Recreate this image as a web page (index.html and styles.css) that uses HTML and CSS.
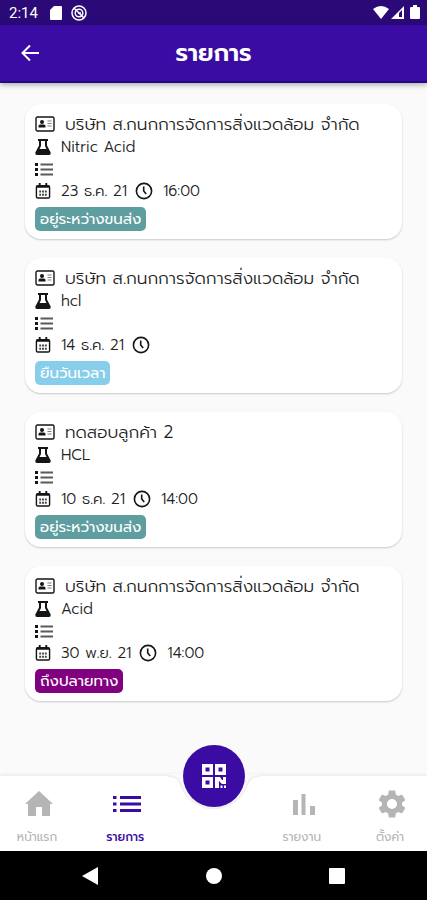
FILE: index.html
```html
<!DOCTYPE html>
<html lang="th">
<head>
<meta charset="utf-8">
<meta name="viewport" content="width=device-width, initial-scale=1">
<title>รายการ</title>
<link rel="stylesheet" href="styles.css">
</head>
<body>
<svg class="defs" aria-hidden="true">
  <symbol id="card" viewBox="0 0 20 16"><rect x="1" y="1" width="18" height="14" rx="1.5" fill="none" stroke="currentColor" stroke-width="1.4"/><circle cx="7" cy="6" r="2" fill="currentColor"/><path d="M3.5 11.5V10q0-1.500 1.500-1.500h4q1.500 0 1.500 1.500v1.500z" fill="currentColor"/><path d="M12.500 5h4M12.500 7.500h4M12.500 10h4" stroke="currentColor" stroke-width="1" opacity=".55"/></symbol>
  <symbol id="flask" viewBox="0 0 16 16"><path d="M3 0h10v2h-1v4.500l3.700 7Q16 16 14 16H2q-2 0-1.700-2.500L4 6.500V2H3zM6 2v5L4.500 10h7L10 7V2z" fill="currentColor" fill-rule="evenodd"/></symbol>
  <symbol id="rows" viewBox="0 0 18 15"><path d="M0 1h3v3H0zM0 6h3v3H0zM0 11h3v3H0z" fill="currentColor"/><path d="M5.500 2.500H18M5.500 7.500H18M5.500 12.500H18" stroke="currentColor" stroke-width="2" opacity=".7"/></symbol>
  <symbol id="calendar" viewBox="0 0 16 17"><rect x="1" y="3" width="14" height="13" rx="1.500" fill="none" stroke="currentColor" stroke-width="1.500"/><path d="M1 3h14v2H1zM3.500 0h2v4h-2zM10.500 0h2v4h-2z" fill="currentColor"/><path d="M4 8h2v2H4zM7 8h2v2H7zM10 8h2v2h-2zM4 11.500h2v2H4zM7 11.500h2v2H7zM10 11.500h2v2h-2z" fill="currentColor" opacity=".8"/></symbol>
  <symbol id="clock" viewBox="0 0 18 18"><circle cx="9" cy="9" r="7.600" fill="none" stroke="currentColor" stroke-width="1.600"/><path d="M8.700 4.500V9l2.500 3" fill="none" stroke="currentColor" stroke-width="1.600"/></symbol>
</svg>

<div class="status">
  <span class="status-time">2:14</span>
  <svg width="12" height="14" viewBox="0 0 12 14"><path d="M4 0h7q1 0 1 1v12q0 1-1 1H1q-1 0-1-1V4z" fill="#fff"/></svg>
  <svg width="16" height="16" viewBox="0 0 16 16" fill="none" stroke="#fff"><circle cx="8" cy="8" r="7" stroke-width="1.500"/><circle cx="8" cy="8" r="3.800" stroke-width="1.500"/><path d="M3 3l10 10" stroke-width="1.500"/><path d="M7 8h3" stroke-width="1.500"/></svg>
  <svg class="status-right" width="48" height="16" viewBox="0 0 48 16"><path d="M0 4Q8-2 16 4L8 14z" fill="#fff"/><path d="M31 1v13H18zM26 8v4h3V5z" fill="#fff" fill-rule="evenodd"/><path d="M38 2h2V0h4v2h2q1 0 1 1v10q0 1-1 1h-8q-1 0-1-1V3q0-1 1-1z" fill="#fff"/></svg>
</div>

<header class="appbar">
  <button class="back" type="button" aria-label="กลับ"><svg width="20" height="18" viewBox="0 0 20 18" fill="none" stroke="#fff" stroke-width="2"><path d="M19 9H3M10 1.500L2.500 9l7.500 7.500"/></svg></button>
  <h1>รายการ</h1>
</header>

<main class="list">
  <article class="job">
    <h2><svg class="ic-card"><use href="#card"/></svg>บริษัท ส.กนกการจัดการสิ่งแวดล้อม จำกัด</h2>
    <p class="line"><svg class="ic"><use href="#flask"/></svg>Nitric Acid</p>
    <p class="line"><svg class="ic-rows"><use href="#rows"/></svg></p>
    <p class="line"><svg class="ic"><use href="#calendar"/></svg><span class="when">23 ธ.ค. 21<svg class="ic-clock"><use href="#clock"/></svg></span><span>16:00</span></p>
    <span class="badge transit">อยู่ระหว่างขนส่ง</span>
  </article>
  <article class="job">
    <h2><svg class="ic-card"><use href="#card"/></svg>บริษัท ส.กนกการจัดการสิ่งแวดล้อม จำกัด</h2>
    <p class="line"><svg class="ic"><use href="#flask"/></svg>hcl</p>
    <p class="line"><svg class="ic-rows"><use href="#rows"/></svg></p>
    <p class="line"><svg class="ic"><use href="#calendar"/></svg><span class="when">14 ธ.ค. 21<svg class="ic-clock"><use href="#clock"/></svg></span></p>
    <span class="badge confirm">ยืนวันเวลา</span>
  </article>
  <article class="job">
    <h2><svg class="ic-card"><use href="#card"/></svg>ทดสอบลูกค้า 2</h2>
    <p class="line"><svg class="ic"><use href="#flask"/></svg>HCL</p>
    <p class="line"><svg class="ic-rows"><use href="#rows"/></svg></p>
    <p class="line"><svg class="ic"><use href="#calendar"/></svg><span class="when">10 ธ.ค. 21<svg class="ic-clock"><use href="#clock"/></svg></span><span>14:00</span></p>
    <span class="badge transit">อยู่ระหว่างขนส่ง</span>
  </article>
  <article class="job">
    <h2><svg class="ic-card"><use href="#card"/></svg>บริษัท ส.กนกการจัดการสิ่งแวดล้อม จำกัด</h2>
    <p class="line"><svg class="ic"><use href="#flask"/></svg>Acid</p>
    <p class="line"><svg class="ic-rows"><use href="#rows"/></svg></p>
    <p class="line"><svg class="ic"><use href="#calendar"/></svg><span class="when">30 พ.ย. 21<svg class="ic-clock"><use href="#clock"/></svg></span><span>14:00</span></p>
    <span class="badge arrived">ถึงปลายทาง</span>
  </article>
</main>

<nav class="tabs">
  <svg class="notch" width="100" height="40" viewBox="0 -2 100 40"><path d="M4-2V0C12 0 15 3 17 9A35 35 0 0 0 83 9C85 3 88 0 96 0V-2z" fill="#fafafa"/><path d="M4 0C12 0 15 3 17 9A35 35 0 0 0 83 9C85 3 88 0 96 0" fill="none" stroke="#f0f0f0" stroke-width="2"/></svg>
  <button class="scan" type="button" aria-label="สแกน"><svg width="24" height="24" viewBox="0 0 24 24"><path fill="#fff" fill-rule="evenodd" d="M0 0h11v11H0zM3.500 3.500v4h4v-4zM13 0h11v11H13zM16.500 3.500v4h4v-4zM0 13h11v11H0zM3.500 16.500v4h4v-4zM13 13h5l2 3h1v-3h3v7h-4l-3-3v7h-4zM18.500 21.500h2V24h-2zM22 21.500h2V24h-2z"/></svg></button>
  <a class="tab" href="#home"><svg viewBox="0 0 28 28"><path d="M14 1l14 13h-3v12h-8v-9h-6v9H3V14H0z" fill="currentColor"/></svg>หน้าแรก</a>
  <a class="tab active" href="#list"><svg viewBox="0 0 28 28"><path d="M0 6h3.500v3H0zM0 12.500h3.500v3H0zM0 19h3.500v3H0zM7 6h21v3H7zM7 12.500h21v3H7zM7 19h21v3H7z" fill="currentColor"/></svg>รายการ</a>
  <span class="tab-gap"></span>
  <a class="tab" href="#report"><svg viewBox="0 0 28 28"><path d="M3 10h5v15H3zM11.500 4h4v21h-4zM20 16h5v9h-5z" fill="currentColor"/></svg>รายงาน</a>
  <a class="tab" href="#settings"><svg viewBox="2 2 20 20"><path d="M19.140 12.940c.04-.3.060-.610.060-.940 0-.320-.02-.640-.070-.940l2.030-1.580c.180-.140.230-.410.120-.610l-1.920-3.320c-.120-.220-.370-.290-.590-.220l-2.390.960c-.500-.380-1.030-.700-1.620-.940l-.360-2.540c-.040-.240-.240-.410-.480-.410h-3.840c-.240 0-.430.170-.470.410l-.360 2.540c-.590.240-1.130.570-1.620.940l-2.390-.960c-.220-.080-.470 0-.590.220L2.740 8.870c-.120.210-.080.470.120.610l2.030 1.580c-.050.300-.090.630-.090.940s.020.640.070.940l-2.030 1.580c-.180.140-.230.410-.120.610l1.920 3.320c.120.220.370.290.590.220l2.390-.960c.500.380 1.030.700 1.620.940l.360 2.540c.050.240.240.410.480.410h3.840c.240 0 .440-.170.470-.410l.360-2.540c.590-.240 1.130-.560 1.620-.940l2.390.960c.220.080.470 0 .590-.220l1.920-3.320c.120-.220.070-.470-.120-.610zM12 15.600A3.600 3.600 0 1 1 12 8.400a3.600 3.600 0 0 1 0 7.200z" fill="currentColor" fill-rule="evenodd"/></svg>ตั้งค่า</a>
</nav>

<footer class="system">
  <button type="button" aria-label="ย้อนกลับ"><svg width="18" height="18" viewBox="0 0 18 18"><path d="M16 0v18L0 9z" fill="#fff"/></svg></button>
  <button type="button" aria-label="โฮม"><svg width="18" height="18" viewBox="0 0 18 18"><circle cx="9" cy="9" r="8" fill="#fff"/></svg></button>
  <button type="button" aria-label="ล่าสุด"><svg width="18" height="18" viewBox="0 0 18 18"><rect x="1" y="1" width="16" height="16" rx="1" fill="#fff"/></svg></button>
</footer>
</body>
</html>
```
FILE: styles.css
```css
* { box-sizing: border-box; margin: 0; }

body {
  min-height: 100vh;
  display: flex;
  flex-direction: column;
  background: #fafafa;
  color: #222;
  font-family: Prompt, Kanit, "Noto Sans Thai", "Noto Sans", sans-serif;
  font-size: 15px;
  font-weight: 300;
}

button {
  display: grid;
  place-items: center;
  padding: 0;
  border: 0;
  background: none;
}

.defs { position: absolute; width: 0; height: 0; }

.status {
  display: flex;
  align-items: center;
  gap: 9px;
  height: 25px;
  padding: 0 6px 0 9px;
  background: #2b0a78;
  color: #fff;
}
.status-time { padding-right: 3px; font: 400 15px/24px Roboto, sans-serif; }
.status-right { margin-left: auto; }

.appbar {
  display: grid;
  grid-template-columns: 48px 1fr 48px;
  align-items: center;
  height: 58px;
  padding: 0 6px;
  background: #3a0ca3;
  color: #fff;
  border-bottom: 2px solid #25087f;
  box-shadow: 0 2px 5px rgba(0, 0, 0, .3);
}
.back { height: 48px; }
.appbar h1 { font-size: 24px; line-height: 32px; font-weight: 600; text-align: center; }

.list {
  flex: 1;
  display: flex;
  flex-direction: column;
  gap: 19px;
  padding: 21px 25px 40px;
}

.job {
  padding: 8px 10px;
  border-radius: 16px;
  background: #fff;
  box-shadow: 0 1px 2px rgba(0, 0, 0, .2);
}
.job h2 {
  display: flex;
  align-items: center;
  gap: 10px;
  font-size: 17px;
  line-height: 24px;
  font-weight: 300;
  white-space: nowrap;
}
.line { display: flex; align-items: center; gap: 10px; height: 22px; line-height: 22px; }
.when { display: flex; align-items: center; gap: 8px; }
.job svg { color: #151515; flex: none; }
.ic-card { width: 20px; height: 16px; }
.ic { width: 16px; height: 16px; }
.ic-rows { width: 18px; height: 15px; }
.ic-clock { width: 18px; height: 18px; }

.badge {
  display: block;
  width: fit-content;
  margin-top: 5px;
  padding: 0 5px;
  border-radius: 5px;
  color: #fff;
  line-height: 24px;
  font-weight: 400;
}
.transit { background: #5f9ea0; }
.confirm { background: #87ceeb; }
.arrived { background: #800080; }

.tabs {
  position: relative;
  display: flex;
  justify-content: space-between;
  height: 75px;
  padding: 14px 15px 0;
  background: #fff;
  box-shadow: 0 -1px 4px rgba(0, 0, 0, .08);
}
.notch { position: absolute; top: -2px; left: 50%; transform: translateX(-50%); }
.scan {
  position: absolute;
  top: 0;
  left: 50%;
  width: 62px;
  height: 62px;
  border-radius: 50%;
  background: #3a0ca3;
  transform: translate(-50%, -50%);
}
.tab, .tab-gap { width: 44px; }
.tab {
  display: flex;
  flex-direction: column;
  align-items: center;
  gap: 9px;
  color: #b5b5b5;
  font-size: 12px;
  line-height: 20px;
  font-weight: 400;
  text-decoration: none;
  white-space: nowrap;
}
.tab svg { width: 28px; height: 28px; margin-left: 4px; }
.active { color: #3a0ca3; font-weight: 500; }

.system {
  display: flex;
  justify-content: center;
  gap: 105px;
  height: 49px;
  background: #000;
}
```
